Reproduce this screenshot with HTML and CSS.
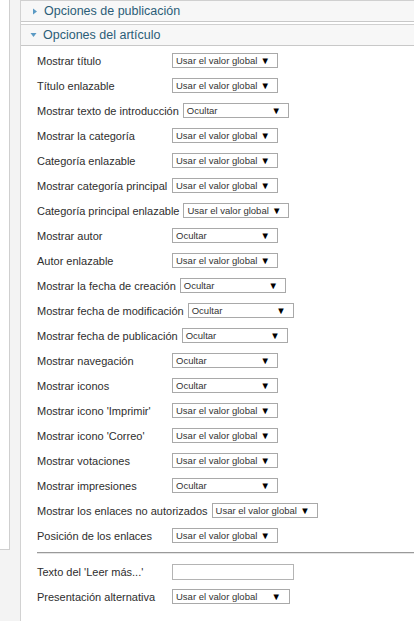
FILE: index.html
```html
<!DOCTYPE html>
<html lang="es">
  <head>
    <meta charset="utf-8" />
    <link rel="stylesheet" href="styles.css">
    <title>Opciones del artículo</title>
  </head>
  <body>
    <div class="page">
      <div class="rail">
        <div class="rail-box"></div>
      </div>

      <div class="main">
        <div class="pane-toggler">
          <svg class="arrow" width="6" height="7" viewBox="0 0 6 7"><path d="M1 0.5 L5 3.5 L1 6.5 Z" fill="#5b9ac4"/></svg>
          <span>Opciones de publicación</span>
        </div>

        <div class="pane-toggler open">
          <svg class="arrow" width="7" height="6" viewBox="0 0 7 6"><path d="M0.5 1 L6.5 1 L3.5 5 Z" fill="#5b9ac4"/></svg>
          <span>Opciones del artículo</span>
        </div>

        <div class="pane-content">
          <div class="param"><label>Mostrar título</label><div class="select"><span>Usar el valor global</span><i>▼</i></div></div>
          <div class="param"><label>Título enlazable</label><div class="select"><span>Usar el valor global</span><i>▼</i></div></div>
          <div class="param"><label>Mostrar texto de introducción</label><div class="select"><span>Ocultar</span><i>▼</i></div></div>
          <div class="param"><label>Mostrar la categoría</label><div class="select"><span>Usar el valor global</span><i>▼</i></div></div>
          <div class="param"><label>Categoría enlazable</label><div class="select"><span>Usar el valor global</span><i>▼</i></div></div>
          <div class="param"><label>Mostrar categoría principal</label><div class="select"><span>Usar el valor global</span><i>▼</i></div></div>
          <div class="param"><label>Categoría principal enlazable</label><div class="select"><span>Usar el valor global</span><i>▼</i></div></div>
          <div class="param"><label>Mostrar autor</label><div class="select"><span>Ocultar</span><i>▼</i></div></div>
          <div class="param"><label>Autor enlazable</label><div class="select"><span>Usar el valor global</span><i>▼</i></div></div>
          <div class="param"><label>Mostrar la fecha de creación</label><div class="select"><span>Ocultar</span><i>▼</i></div></div>
          <div class="param"><label>Mostrar fecha de modificación</label><div class="select"><span>Ocultar</span><i>▼</i></div></div>
          <div class="param"><label>Mostrar fecha de publicación</label><div class="select"><span>Ocultar</span><i>▼</i></div></div>
          <div class="param"><label>Mostrar navegación</label><div class="select"><span>Ocultar</span><i>▼</i></div></div>
          <div class="param"><label>Mostrar iconos</label><div class="select"><span>Ocultar</span><i>▼</i></div></div>
          <div class="param"><label>Mostrar icono 'Imprimir'</label><div class="select"><span>Usar el valor global</span><i>▼</i></div></div>
          <div class="param"><label>Mostrar icono 'Correo'</label><div class="select"><span>Usar el valor global</span><i>▼</i></div></div>
          <div class="param"><label>Mostrar votaciones</label><div class="select"><span>Usar el valor global</span><i>▼</i></div></div>
          <div class="param"><label>Mostrar impresiones</label><div class="select"><span>Ocultar</span><i>▼</i></div></div>
          <div class="param"><label>Mostrar los enlaces no autorizados</label><div class="select"><span>Usar el valor global</span><i>▼</i></div></div>
          <div class="param"><label>Posición de los enlaces</label><div class="select"><span>Usar el valor global</span><i>▼</i></div></div>

          <div class="separator"></div>

          <div class="param"><label>Texto del 'Leer más...'</label><div class="text-input"></div></div>
          <div class="param"><label>Presentación alternativa</label><div class="select wide"><span>Usar el valor global</span><i>▼</i></div></div>
        </div>
      </div>
    </div>
  </body>
</html>
```

FILE: styles.css
```css
body {
  margin: 0;
  background: #fff;
  font-family: "Liberation Sans", Arial, sans-serif;
  color: #2e2e2e;
}
.page {
  display: flex;
  min-height: 621px;
}
.rail {
  width: 20px;
  flex-shrink: 0;
  background: #f3f3f3;
  border-right: 1px solid #d2d2d2;
}
.rail-box {
  width: 9px;
  height: 549px;
  background: #fff;
  border-right: 1px solid #cfcfcf;
  border-bottom: 1px solid #cfcfcf;
}
.main {
  flex: 1;
  min-width: 0;
}
.pane-toggler {
  display: flex;
  align-items: center;
  height: 20px;
  background: #f7f7f7;
  border-top: 1px solid #d0d0d0;
  border-bottom: 1px solid #c8c8c8;
  color: #2b5d77;
  font-size: 12.5px;
  white-space: nowrap;
}
.pane-toggler + .pane-toggler {
  margin-top: 2px;
}
.pane-toggler .arrow {
  margin-left: 11px;
  margin-right: 6px;
}
.pane-toggler.open .arrow {
  margin-left: 9px;
  margin-right: 6px;
}
.pane-content {
  padding: 2px 0 0 16px;
}
.param {
  display: flex;
  align-items: center;
  height: 25px;
  font-size: 11px;
  white-space: nowrap;
}
.param label {
  min-width: 135px;
  padding-right: 4px;
  box-sizing: border-box;
}
.select {
  display: flex;
  align-items: center;
  justify-content: space-between;
  width: 106px;
  height: 15px;
  box-sizing: border-box;
  border: 1px solid #a9a9a9;
  padding: 0 7px 0 3px;
  font-size: 9.5px;
  color: #333;
  background: #fff;
}
.select i {
  font-style: normal;
  font-size: 9.5px;
  color: #000;
}
.select.wide {
  width: 118px;
  padding-right: 8px;
}
.text-input {
  width: 122px;
  height: 16px;
  box-sizing: border-box;
  border: 1px solid #b4b4b4;
}
.separator {
  height: 0;
  margin: 4px 0 5px;
  border-top: 1px solid #9a9a9a;
  border-bottom: 1px solid #e4e4e4;
}
```
